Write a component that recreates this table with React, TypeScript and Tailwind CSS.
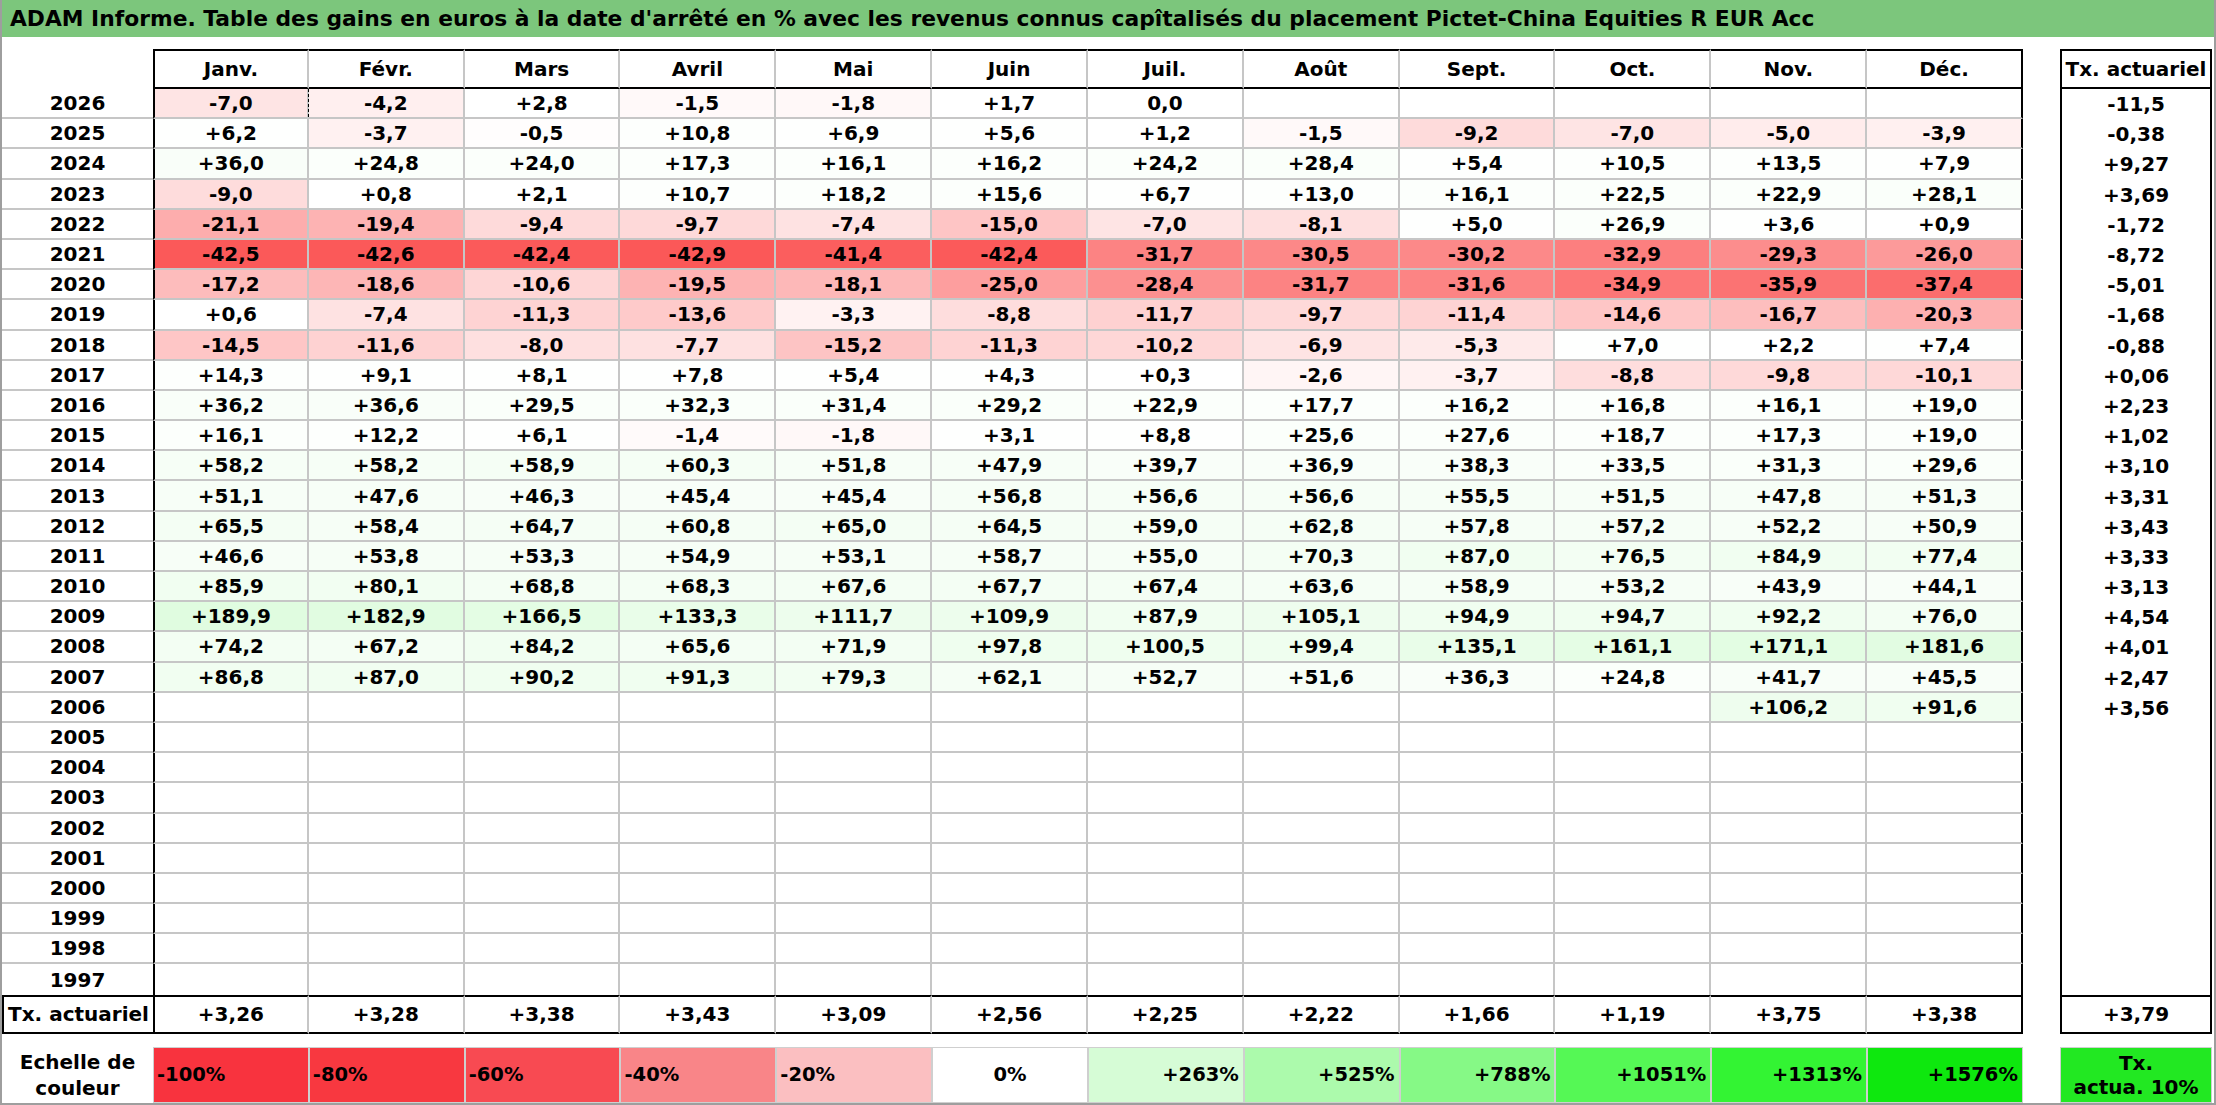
import clsx from 'clsx';

const MONTHS = ['Janv.', 'Févr.', 'Mars', 'Avril', 'Mai', 'Juin', 'Juil.', 'Août', 'Sept.', 'Oct.', 'Nov.', 'Déc.'];

// year, 12 monthly values, annualised rate
const ROWS: [string, string[], string][] = [
  ['2026', ['-7,0', '-4,2', '+2,8', '-1,5', '-1,8', '+1,7', '0,0', '', '', '', '', ''], '-11,5'],
  ['2025', ['+6,2', '-3,7', '-0,5', '+10,8', '+6,9', '+5,6', '+1,2', '-1,5', '-9,2', '-7,0', '-5,0', '-3,9'], '-0,38'],
  ['2024', ['+36,0', '+24,8', '+24,0', '+17,3', '+16,1', '+16,2', '+24,2', '+28,4', '+5,4', '+10,5', '+13,5', '+7,9'], '+9,27'],
  ['2023', ['-9,0', '+0,8', '+2,1', '+10,7', '+18,2', '+15,6', '+6,7', '+13,0', '+16,1', '+22,5', '+22,9', '+28,1'], '+3,69'],
  ['2022', ['-21,1', '-19,4', '-9,4', '-9,7', '-7,4', '-15,0', '-7,0', '-8,1', '+5,0', '+26,9', '+3,6', '+0,9'], '-1,72'],
  ['2021', ['-42,5', '-42,6', '-42,4', '-42,9', '-41,4', '-42,4', '-31,7', '-30,5', '-30,2', '-32,9', '-29,3', '-26,0'], '-8,72'],
  ['2020', ['-17,2', '-18,6', '-10,6', '-19,5', '-18,1', '-25,0', '-28,4', '-31,7', '-31,6', '-34,9', '-35,9', '-37,4'], '-5,01'],
  ['2019', ['+0,6', '-7,4', '-11,3', '-13,6', '-3,3', '-8,8', '-11,7', '-9,7', '-11,4', '-14,6', '-16,7', '-20,3'], '-1,68'],
  ['2018', ['-14,5', '-11,6', '-8,0', '-7,7', '-15,2', '-11,3', '-10,2', '-6,9', '-5,3', '+7,0', '+2,2', '+7,4'], '-0,88'],
  ['2017', ['+14,3', '+9,1', '+8,1', '+7,8', '+5,4', '+4,3', '+0,3', '-2,6', '-3,7', '-8,8', '-9,8', '-10,1'], '+0,06'],
  ['2016', ['+36,2', '+36,6', '+29,5', '+32,3', '+31,4', '+29,2', '+22,9', '+17,7', '+16,2', '+16,8', '+16,1', '+19,0'], '+2,23'],
  ['2015', ['+16,1', '+12,2', '+6,1', '-1,4', '-1,8', '+3,1', '+8,8', '+25,6', '+27,6', '+18,7', '+17,3', '+19,0'], '+1,02'],
  ['2014', ['+58,2', '+58,2', '+58,9', '+60,3', '+51,8', '+47,9', '+39,7', '+36,9', '+38,3', '+33,5', '+31,3', '+29,6'], '+3,10'],
  ['2013', ['+51,1', '+47,6', '+46,3', '+45,4', '+45,4', '+56,8', '+56,6', '+56,6', '+55,5', '+51,5', '+47,8', '+51,3'], '+3,31'],
  ['2012', ['+65,5', '+58,4', '+64,7', '+60,8', '+65,0', '+64,5', '+59,0', '+62,8', '+57,8', '+57,2', '+52,2', '+50,9'], '+3,43'],
  ['2011', ['+46,6', '+53,8', '+53,3', '+54,9', '+53,1', '+58,7', '+55,0', '+70,3', '+87,0', '+76,5', '+84,9', '+77,4'], '+3,33'],
  ['2010', ['+85,9', '+80,1', '+68,8', '+68,3', '+67,6', '+67,7', '+67,4', '+63,6', '+58,9', '+53,2', '+43,9', '+44,1'], '+3,13'],
  ['2009', ['+189,9', '+182,9', '+166,5', '+133,3', '+111,7', '+109,9', '+87,9', '+105,1', '+94,9', '+94,7', '+92,2', '+76,0'], '+4,54'],
  ['2008', ['+74,2', '+67,2', '+84,2', '+65,6', '+71,9', '+97,8', '+100,5', '+99,4', '+135,1', '+161,1', '+171,1', '+181,6'], '+4,01'],
  ['2007', ['+86,8', '+87,0', '+90,2', '+91,3', '+79,3', '+62,1', '+52,7', '+51,6', '+36,3', '+24,8', '+41,7', '+45,5'], '+2,47'],
  ['2006', ['', '', '', '', '', '', '', '', '', '', '+106,2', '+91,6'], '+3,56'],
  ...['2005', '2004', '2003', '2002', '2001', '2000', '1999', '1998', '1997'].map(
    (y) => [y, Array(12).fill(''), ''] as [string, string[], string]
  ),
];

const TOTALS = ['+3,26', '+3,28', '+3,38', '+3,43', '+3,09', '+2,56', '+2,25', '+2,22', '+1,66', '+1,19', '+3,75', '+3,38'];

const SCALE = [
  { label: '-100%', cls: 'bg-[#f8333e] justify-start pl-[3px]' },
  { label: '-80%', cls: 'bg-[#f83840] justify-start pl-[3px]' },
  { label: '-60%', cls: 'bg-[#f84a52] justify-start pl-[3px]' },
  { label: '-40%', cls: 'bg-[#f98588] justify-start pl-[3px]' },
  { label: '-20%', cls: 'bg-[#fbbfc1] justify-start pl-[3px]' },
  { label: '0%', cls: 'bg-white justify-center' },
  { label: '+263%', cls: 'bg-[#d6fcd6] justify-end pr-[4px]' },
  { label: '+525%', cls: 'bg-[#acfaac] justify-end pr-[4px]' },
  { label: '+788%', cls: 'bg-[#86f986] justify-end pr-[4px]' },
  { label: '+1051%', cls: 'bg-[#55f855] justify-end pr-[4px]' },
  { label: '+1313%', cls: 'bg-[#33f433] justify-end pr-[4px]' },
  { label: '+1576%', cls: 'bg-[#0ee80e] justify-end pr-[4px]' },
];

const cellBg = (s: string) => {
  if (!s) return '#ffffff';
  const v = parseFloat(s.replace(',', '.'));
  if (v < 0) {
    const t = Math.min(-v / 50, 1);
    return `rgb(${Math.round(255 - t * 5)}, ${Math.round(255 - t * 195)}, ${Math.round(255 - t * 195)})`;
  }
  const t = Math.min(v / 1576, 1);
  return `rgb(${Math.round(255 - t * 255)}, ${Math.round(255 - t * 23)}, ${Math.round(255 - t * 255)})`;
};

const GRID = 'grid grid-cols-[151px_repeat(12,minmax(0,1fr))] w-[2021px]';

const monthBorder = (i: number) =>
  clsx(i === 0 && 'border-l-2 border-l-black', i === 11 ? 'border-r-2 border-r-black' : 'border-r-2 border-r-[#c6c6c6]');

const App = () => {
  return (
    <div
      className="w-[2216px] h-[1105px] flex flex-col bg-white border-x-2 border-b-2 border-[#9e9e9e] text-black font-bold text-[20px] leading-none overflow-hidden"
      style={{ fontFamily: '"DejaVu Sans", "Liberation Sans", sans-serif' }}
    >
      <div className="h-[37px] shrink-0 bg-[#7cc67c] flex items-center pl-[8px] text-[21.8px]">
        ADAM Informe. Table des gains en euros à la date d'arrêté en % avec les revenus connus capîtalisés du placement Pictet-China Equities R EUR Acc
      </div>

      <div className="flex mt-[12px]">
        {/* main table */}
        <div className="flex flex-col">
          <div className={clsx(GRID, 'h-[40px]')}>
            <div />
            {MONTHS.map((m, i) => (
              <div
                key={m}
                className={clsx('flex items-center justify-center border-y-2 border-y-black', monthBorder(i))}
              >
                {m}
              </div>
            ))}
          </div>

          {ROWS.map(([year, vals], r) => {
            const last = r === ROWS.length - 1;
            return (
              <div key={year} className={clsx(GRID, 'h-[30.2px]')}>
                <div className={clsx('flex items-center justify-center', !last && 'border-b-2 border-b-[#c6c6c6]')}>
                  {year}
                </div>
                {vals.map((v, i) => (
                  <div
                    key={i}
                    className={clsx(
                      'relative flex items-center justify-center',
                      !last && 'border-b-2 border-b-[#c6c6c6]',
                      monthBorder(i)
                    )}
                    style={{ backgroundColor: cellBg(v) }}
                  >
                    {v}
                    {r === 0 && i === 0 && (
                      <span className="absolute -right-[2px] top-0 bottom-0 border-l border-dashed border-black" />
                    )}
                  </div>
                ))}
              </div>
            );
          })}

          <div className={clsx(GRID, 'h-[39px]')}>
            <div className="flex items-center justify-center border-y-2 border-y-black border-l-2 border-l-black">
              Tx. actuariel
            </div>
            {TOTALS.map((v, i) => (
              <div key={i} className={clsx('flex items-center justify-center border-y-2 border-y-black', monthBorder(i))}>
                {v}
              </div>
            ))}
          </div>

          <div className={clsx(GRID, 'h-[56px] mt-[13px]')}>
            <div className="flex flex-col items-center justify-center leading-[26px]">
              <span>Echelle de</span>
              <span>couleur</span>
            </div>
            {SCALE.map((s) => (
              <div key={s.label} className={clsx('flex items-center border border-[#cfcfcf] text-[19.5px]', s.cls)}>
                {s.label}
              </div>
            ))}
          </div>
        </div>

        {/* annualised rate column */}
        <div className="ml-[37px] w-[152px] flex flex-col">
          <div className="flex flex-col border-2 border-black">
            <div className="h-[38px] flex items-center justify-center border-b-2 border-black">Tx. actuariel</div>
            {ROWS.map(([year, , tx]) => (
              <div key={year} className="h-[30.2px] flex items-center justify-center">
                {tx}
              </div>
            ))}
            <div className="h-[37px] flex items-center justify-center border-t-2 border-black">+3,79</div>
          </div>
          <div className="h-[56px] mt-[13px] bg-[#22e822] border border-[#cfcfcf] flex flex-col items-center justify-center leading-[24px]">
            <span>Tx.</span>
            <span>actua. 10%</span>
          </div>
        </div>
      </div>
    </div>
  );
};

export default App;
